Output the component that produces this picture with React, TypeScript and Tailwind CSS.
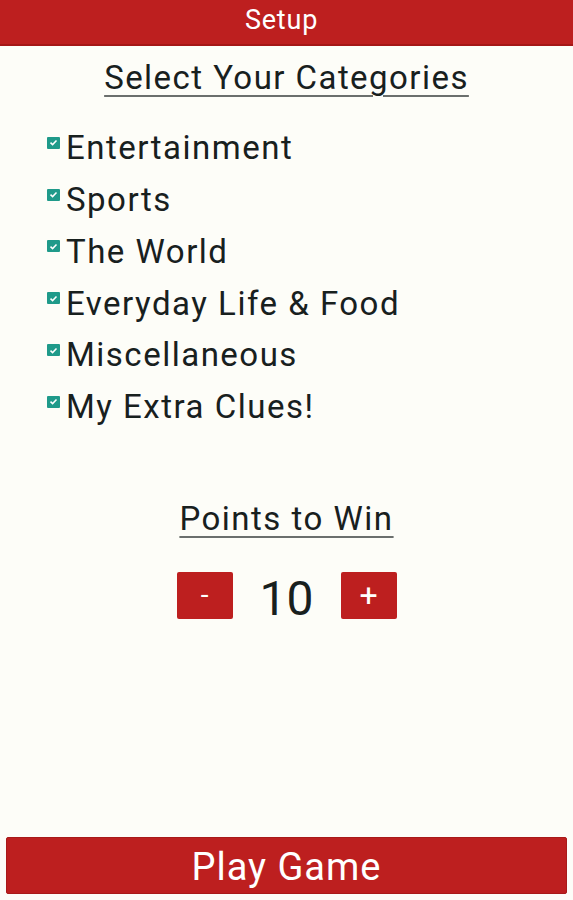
const CATEGORIES = [
  "Entertainment",
  "Sports",
  "The World",
  "Everyday Life & Food",
  "Miscellaneous",
  "My Extra Clues!",
];

function CheckBox() {
  return (
    <span className="mt-[-10px] flex h-[12px] w-[13px] shrink-0 items-center justify-center rounded-[1px] bg-[#1f9a8a]">
      <svg viewBox="0 0 12 12" className="h-[9px] w-[9px]">
        <path
          d="M2 6.2 L4.8 8.8 L10 3.4"
          fill="none"
          stroke="#ffffff"
          strokeWidth="2"
        />
      </svg>
    </span>
  );
}

export default function App() {
  return (
    <div
      className="flex h-[900px] w-[573px] flex-col bg-[#fdfdf8] text-[#18201e]"
      style={{ fontFamily: "Roboto, 'Liberation Sans', sans-serif" }}
    >
      <header className="flex h-[46px] items-center justify-center border-b-2 border-[#a51717] bg-[#bd1f1f] pb-[4px] pr-[10px] text-[27px] tracking-[0.8px] text-white">
        Setup
      </header>

      <h1 className="mt-[10px] text-center text-[33px] leading-[44px] tracking-[1.45px]">
        <span className="underline decoration-[#6b6f6d] decoration-2 underline-offset-[6px]">
          Select Your Categories
        </span>
      </h1>

      <ul className="mt-[22px] flex flex-col pl-[47px]">
        {CATEGORIES.map((name) => (
          <li
            key={name}
            className="flex h-[51.8px] items-center gap-[6px] text-[33px] tracking-[1.5px]"
          >
            <CheckBox />
            <span>{name}</span>
          </li>
        ))}
      </ul>

      <h2 className="mt-[64px] text-center text-[33px] leading-[44px] tracking-[1.5px]">
        <span className="underline decoration-[#6b6f6d] decoration-2 underline-offset-[6px]">
          Points to Win
        </span>
      </h2>

      <div className="mt-[31px] flex items-start justify-center">
        <button className="flex h-[47px] w-[56px] items-center justify-center rounded-[2px] bg-[#bd1f1f] text-[28px] text-white">
          -
        </button>
        <span className="w-[108px] pt-[3px] text-center text-[48px] leading-[47px]">
          10
        </span>
        <button className="flex h-[47px] w-[56px] items-center justify-center rounded-[2px] bg-[#bd1f1f] text-[32px] text-white">
          +
        </button>
      </div>

      <div className="mt-auto px-[6px] pb-[6px]">
        <button className="flex h-[57px] w-full items-center justify-center rounded-[2px] border border-[#a81a1a] bg-[#bd1f1f] pt-[4px] text-[38px] tracking-[1px] text-white">
          Play Game
        </button>
      </div>
    </div>
  );
}
